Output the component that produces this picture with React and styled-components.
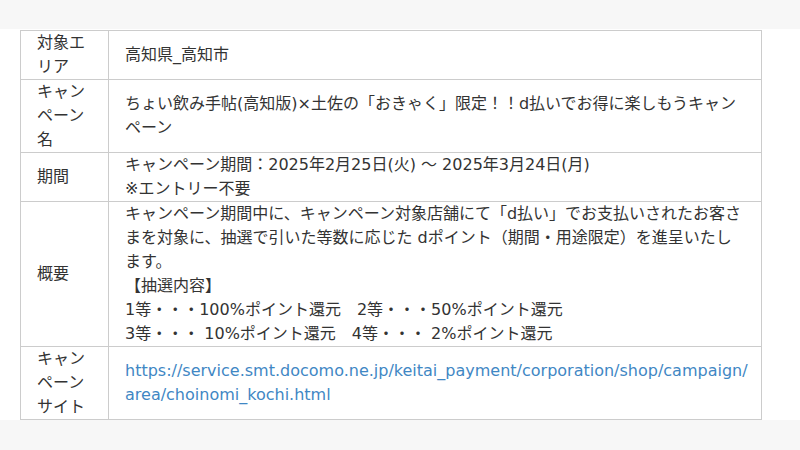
import React from "react";
import styled, { createGlobalStyle } from "styled-components";

const GlobalStyle = createGlobalStyle`
  html, body {
    margin: 0;
    padding: 0;
    background: #f7f7f7;
  }
  body {
    font-family: "DejaVu Sans", "Noto Sans CJK JP", sans-serif;
    color: #333;
  }
`;

const Page = styled.div`
  padding: 29px 0 31px;
`;

const Section = styled.section`
  background: #fff;
  padding: 1px 39px 0 20px;
`;

const Table = styled.table`
  width: 742px;
  border-collapse: collapse;
  table-layout: fixed;
  font-size: 16px;
  line-height: 24px;
`;

const Head = styled.th`
  border: 1px solid #cccccc;
  padding: 0 10px 0 16px;
  font-weight: normal;
  text-align: left;
  vertical-align: middle;
`;

const Cell = styled.td`
  border: 1px solid #cccccc;
  padding: 0 14px 0 16px;
  vertical-align: middle;
`;

const Link = styled.a`
  color: #3f87c4;
  text-decoration: none;
`;

const rows = [
  { label: "対象エリア", body: "高知県_高知市" },
  {
    label: "キャンペーン名",
    body: "ちょい飲み手帖(高知版)×土佐の「おきゃく」限定！！d払いでお得に楽しもうキャンペーン",
  },
  {
    label: "期間",
    body: (
      <>
        キャンペーン期間：2025年2月25日(火) ～ 2025年3月24日(月)
        <br />
        ※エントリー不要
      </>
    ),
  },
  {
    label: "概要",
    body: (
      <>
        キャンペーン期間中に、キャンペーン対象店舗にて「d払い」でお支払いされたお客さまを対象に、抽選で引いた等数に応じた dポイント（期間・用途限定）を進呈いたします。
        <br />
        【抽選内容】
        <br />
        1等・・・100%ポイント還元　2等・・・50%ポイント還元
        <br />
        3等・・・ 10%ポイント還元　4等・・・ 2%ポイント還元
      </>
    ),
  },
  {
    label: "キャンペーンサイト",
    body: (
      <Link href="#">
        https://service.smt.docomo.ne.jp/keitai_payment/corporation/shop/campaign/
        <br />
        area/choinomi_kochi.html
      </Link>
    ),
  },
];

const App = () => {
  return (
    <Page>
      <GlobalStyle />
      <Section>
        <Table>
          <colgroup>
            <col style={{ width: 88 }} />
            <col />
          </colgroup>
          <tbody>
            {rows.map((row) => (
              <tr key={row.label}>
                <Head>{row.label}</Head>
                <Cell>{row.body}</Cell>
              </tr>
            ))}
          </tbody>
        </Table>
      </Section>
    </Page>
  );
};

export default App;
